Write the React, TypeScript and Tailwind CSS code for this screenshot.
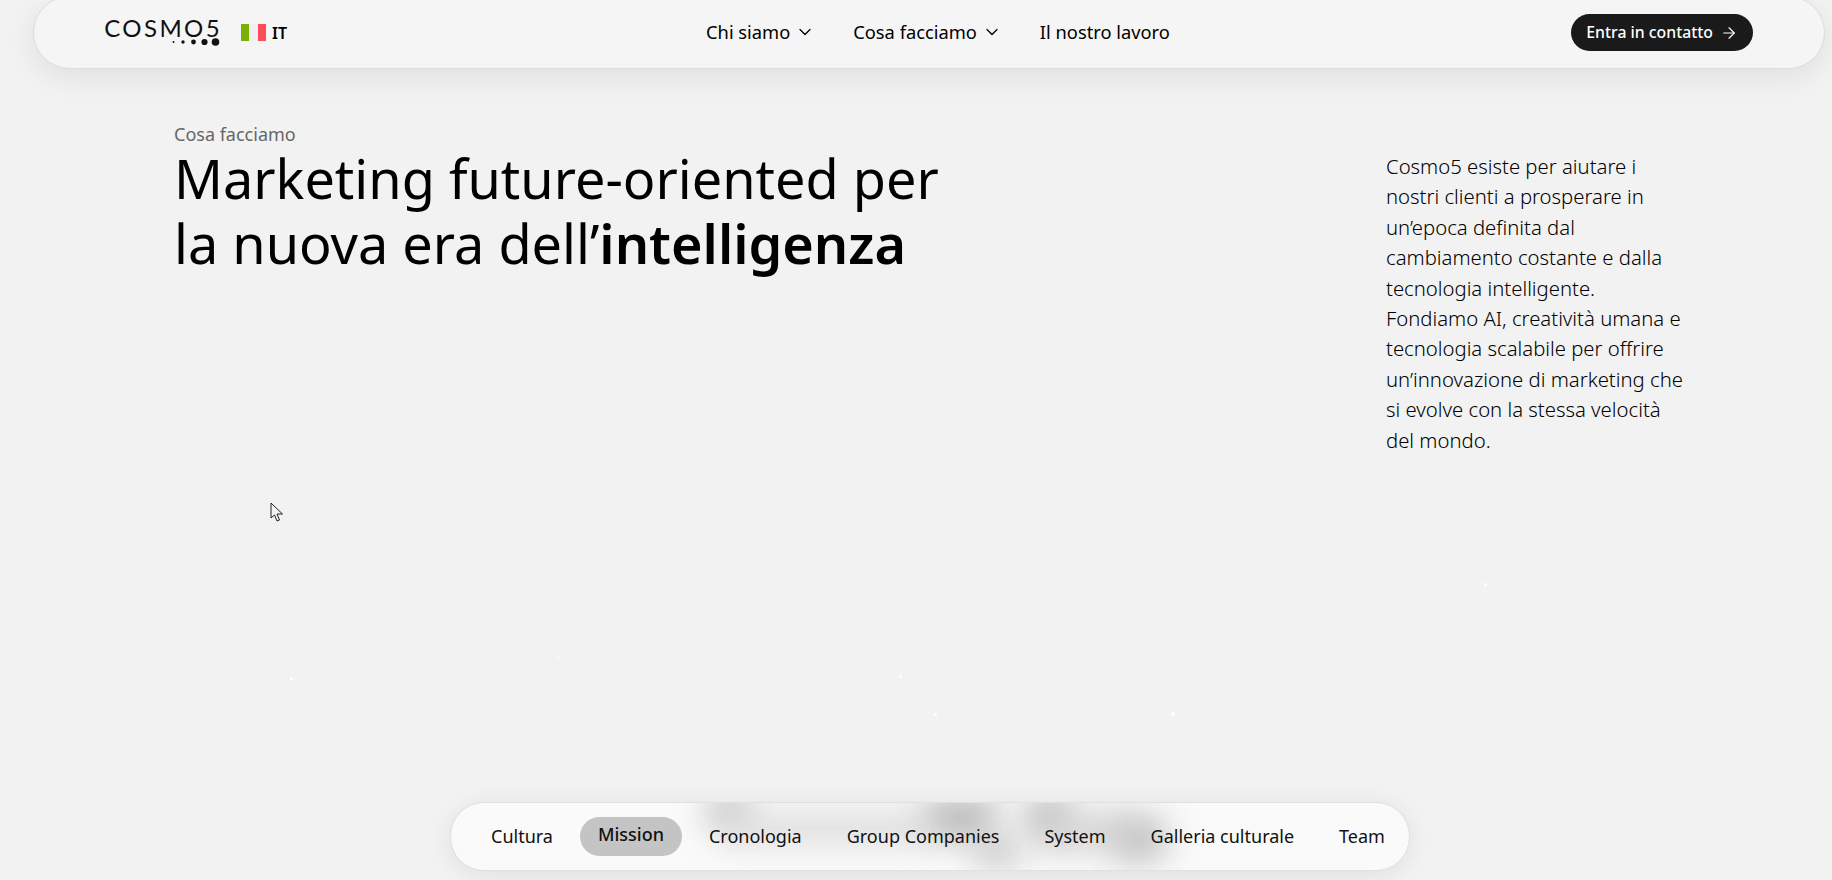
import React from "react"
import { ArrowRight, ChevronDown } from "lucide-react"

const tabs = ["Cultura", "Mission", "Cronologia", "Group Companies", "System", "Galleria culturale", "Team"]

// Blurred shapes showing through the frosted tab bar
const blobs = [
  "left-[258px] top-[-6px] w-[40px] h-[28px] bg-[#b8b8b8]",
  "left-[270px] top-[10px] w-[210px] h-[30px] bg-[#dcdcdc]",
  "left-[476px] top-[-6px] w-[68px] h-[42px] bg-[#bababa]",
  "left-[524px] top-[34px] w-[44px] h-[30px] bg-[#c8c8c8]",
  "left-[576px] top-[-6px] w-[44px] h-[40px] bg-[#bcbcbc]",
  "left-[590px] top-[12px] w-[90px] h-[34px] bg-[#d2d2d2]",
  "left-[664px] top-[14px] w-[50px] h-[44px] bg-[#c2c2c2]",
]

const specks = [
  "left-[1484px] top-[583px] w-[3px] h-[3px]",
  "left-[290px] top-[677px] w-[3px] h-[3px]",
  "left-[557px] top-[657px] w-[2px] h-[2px]",
  "left-[899px] top-[675px] w-[3px] h-[3px]",
  "left-[934px] top-[713px] w-[3px] h-[3px]",
  "left-[1171px] top-[712px] w-[4px] h-[4px]",
]

const Logo = () => (
  <div className="flex flex-col items-end w-[115px]">
    <span className="font-['Lato'] text-[24px] leading-[20px] tracking-[0.1em] -mr-[2px] text-[#111] whitespace-nowrap">
      COSMO5
    </span>
    <svg width="48" height="10" viewBox="0 0 48 10" className="-mt-[1px]">
      <circle cx="1.5" cy="5" r="1" fill="#111" />
      <circle cx="11" cy="5" r="1.7" fill="#111" />
      <circle cx="21.5" cy="5" r="2.4" fill="#111" />
      <circle cx="32.5" cy="5" r="3.1" fill="#111" />
      <circle cx="43.5" cy="5" r="3.8" fill="#111" />
    </svg>
  </div>
)

export default function App() {
  return (
    <div className="relative h-[880px] overflow-hidden bg-[#f2f2f2] font-['Noto_Sans',sans-serif] text-black flex flex-col">
      {/* Top nav */}
      <nav className="-mt-[4px] ml-[33px] mr-[7px] h-[73px] shrink-0 rounded-[37px] bg-[#f5f5f5] border border-[#dcdcdc] shadow-[0_8px_30px_rgba(0,0,0,0.08)] flex items-center pl-[71px] pr-[71px]">
        <Logo />
        <div className="ml-[21px] flex items-center">
          <span className="w-[8px] h-[17px] bg-[#7ab000]" />
          <span className="w-[9px] h-[17px] bg-[#f0f0f0]" />
          <span className="w-[8px] h-[17px] bg-[#ff4d58]" />
          <span className="ml-[6px] text-[16px] font-semibold">IT</span>
        </div>
        <div className="ml-[419px] -mt-[1px] flex items-center text-[18.3px] text-black">
          <span>Chi siamo</span>
          <ChevronDown size={20} strokeWidth={1.5} className="ml-[5px]" />
          <span className="ml-[38px]">Cosa facciamo</span>
          <ChevronDown size={20} strokeWidth={1.5} className="ml-[5px]" />
          <span className="ml-[38px]">Il nostro lavoro</span>
        </div>
        <button className="ml-auto h-[37px] px-[15px] rounded-full bg-[#1a1a1a] text-white text-[15.8px] font-medium flex items-center gap-[7px]">
          Entra in contatto
          <ArrowRight size={18} strokeWidth={1.5} />
        </button>
      </nav>

      {/* Hero */}
      <section className="flex justify-between pl-[174px] pr-[146px]">
        <div className="mt-[53px]">
          <p className="text-[18px] leading-[24px] text-[#666]">Cosa facciamo</p>
          <h1 className="text-[54px] leading-[65px] text-black">
            Marketing future-oriented per
            <br />
            la nuova era dell’<strong className="font-semibold">intelligenza</strong>
          </h1>
        </div>
        <p className="mt-[82px] w-[300px] text-[20.3px] leading-[30.4px] font-light text-black">
          Cosmo5 esiste per aiutare i nostri clienti a prosperare in un’epoca definita dal cambiamento costante e dalla
          tecnologia intelligente. Fondiamo AI, creatività umana e tecnologia scalabile per offrire un’innovazione di
          marketing che si evolve con la stessa velocità del mondo.
        </p>
      </section>

      {/* Tab bar */}
      <div className="mt-auto mb-[9px] ml-[450px] w-[960px] h-[69px] relative rounded-[34px] bg-[#fafafa] border border-[#e0e0e0] shadow-[0_4px_24px_rgba(0,0,0,0.08)] overflow-hidden flex items-center pl-[40px] text-[18px] text-[#111]">
        {blobs.map((b) => (
          <span key={b} className={`absolute blur-[16px] ${b}`} />
        ))}
        {tabs.map((t, i) =>
          t === "Mission" ? (
            <span key={t} className="relative mr-[27px] px-[18px] h-[39px] pb-[3px] -mt-[1px] rounded-[20px] bg-[#c4c4c4] font-medium flex items-center">
              {t}
            </span>
          ) : (
            <span key={t} className={`relative whitespace-nowrap ${i === 0 ? "mr-[27px]" : "mr-[45px] last:mr-0"}`}>
              {t}
            </span>
          ),
        )}
      </div>

      {specks.map((s) => (
        <span key={s} className={`absolute rounded-full bg-white ${s}`} />
      ))}

      {/* Mouse pointer */}
      <svg width="14" height="20" viewBox="0 0 14 20" className="absolute left-[270px] top-[502px]">
        <path d="M1 1 L1 16 L4.5 13 L7 19 L9.5 18 L7 12 L12.5 12 Z" fill="#f2f2f2" stroke="#222" strokeWidth="1" />
      </svg>
    </div>
  )
}
